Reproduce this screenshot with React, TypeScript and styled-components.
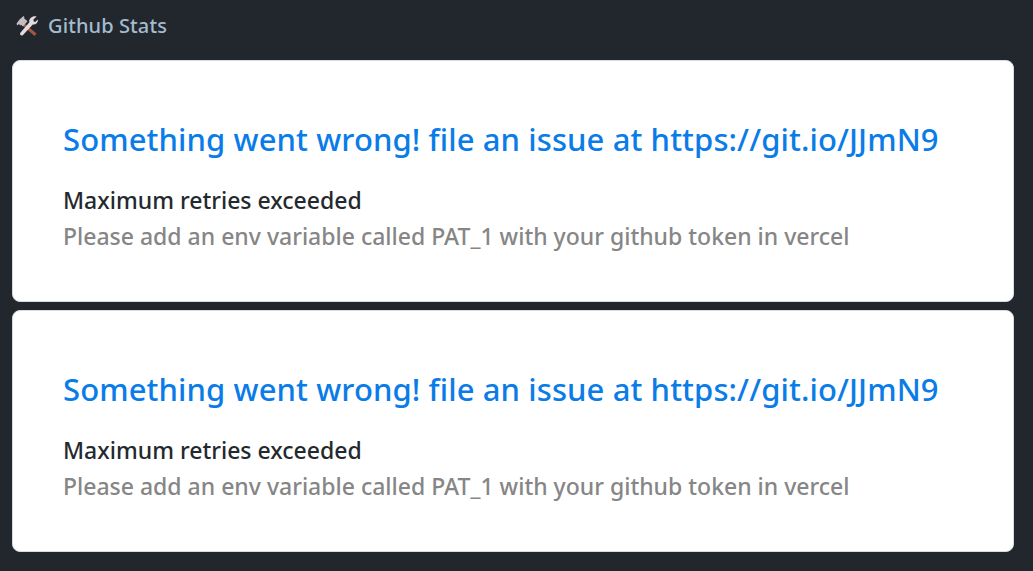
import { FC } from "react";
import styled, { createGlobalStyle } from "styled-components";

const GlobalStyle = createGlobalStyle`
  html, body {
    margin: 0;
    height: 100%;
    background-color: #22272e;
    font-family: "Noto Sans", "Open Sans", sans-serif;
  }
`;

const ToolsIcon: FC = () => (
  <svg width="22" height="22" viewBox="0 0 22 22" aria-hidden="true">
    <path d="M8.5 8.5 L20.5 18.5 L18.5 21 L6.5 10.5 Z" fill="#a5573a" />
    <path d="M3.5 4.5 L7.5 1 L8.5 2.2 L8 3.2 L11.5 6.2 L7 11.5 L5 9.8 L4.2 10.4 L3 9 L1 10.5 L0.6 8.4 Z" fill="#c3bcc0" />
    <path d="M20.6 1.6 L17.4 4.4 L17.8 6.4 L19.2 7 L21.8 4.4 C22.4 7.6 19.6 10.2 16.8 9.4 L7 20 C5.4 21.6 3 19.4 4.6 17.6 L13.4 7.2 C12.4 3.6 16.8 0 20.6 1.6 Z" fill="#e2dde0" />
  </svg>
);

const ErrorCard: FC = () => (
  <Card>
    <Title>Something went wrong! file an issue at https://git.io/JJmN9</Title>
    <Message>Maximum retries exceeded</Message>
    <Hint>Please add an env variable called PAT_1 with your github token in vercel</Hint>
  </Card>
);

export default function App() {
  return (
    <Page>
      <GlobalStyle />
      <Header>
        <ToolsIcon />
        <HeaderTitle>Github Stats</HeaderTitle>
      </Header>
      <Cards>
        <ErrorCard />
        <ErrorCard />
      </Cards>
    </Page>
  );
}

const Page = styled.div`
  width: 1033px;
  height: 571px;
  overflow: hidden;
  background-color: #22272e;
`;

const Header = styled.header`
  display: flex;
  align-items: center;
  gap: 10px;
  height: 60px;
  padding: 0 0 8px 16px;
  box-sizing: border-box;
`;

const HeaderTitle = styled.h1`
  margin: 0;
  font-size: 20px;
  line-height: 26px;
  font-weight: 500;
  letter-spacing: 0.1px;
  color: #a3bccf;
`;

const Cards = styled.main`
  display: flex;
  flex-direction: column;
  gap: 8px;
  padding: 0 19px 0 12px;
`;

const Card = styled.article`
  box-sizing: border-box;
  height: 242px;
  padding: 58px 50px 0;
  background-color: #ffffff;
  border: 1px solid #d9dcdf;
  border-radius: 8px;
`;

const Title = styled.h2`
  margin: 0 0 23px;
  font-size: 31px;
  line-height: 41px;
  font-weight: 500;
  letter-spacing: 0.1px;
  white-space: nowrap;
  color: #0a7ce8;
`;

const Message = styled.p`
  margin: 0;
  font-size: 23px;
  line-height: 34px;
  font-weight: 500;
  white-space: nowrap;
  color: #24292e;
`;

const Hint = styled.p`
  margin: 2px 0 0;
  font-size: 23px;
  line-height: 34px;
  font-weight: 500;
  white-space: nowrap;
  color: #868686;
`;
